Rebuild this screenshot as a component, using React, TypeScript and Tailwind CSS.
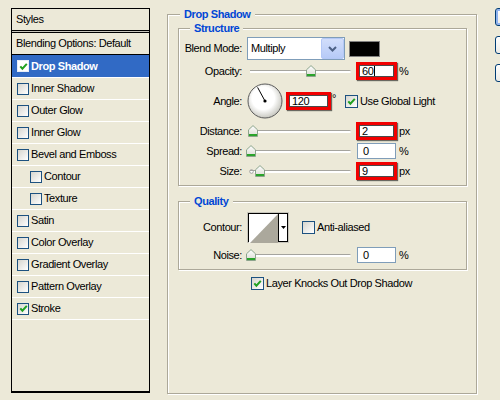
import React from "react";

const Check = ({ small = false, checked = false, selected = false }: { small?: boolean; checked?: boolean; selected?: boolean }) => (
  <div
    className={`${small ? "w-[12px] h-[12px]" : "w-[13px] h-[13px]"} shrink-0 border ${selected ? "border-[#E8EEF8] bg-white" : "border-[#1C5180] bg-[linear-gradient(135deg,#D6D5CE,#FFFFFF)]"} flex items-center justify-center`}
  >
    {checked && (
      <svg width="9" height="9" viewBox="0 0 9 9">
        <path d="M1.3 4.3 L3.4 6.7 L7.8 1.9" fill="none" stroke="#21A121" strokeWidth="2" />
      </svg>
    )}
  </div>
);

const Thumb = ({ pos }: { pos: string }) => (
  <svg className={`absolute top-[4px] ${pos}`} width="10" height="12" viewBox="0 0 10 12">
    <defs>
      <linearGradient id="tg" x1="0" y1="0" x2="0" y2="1">
        <stop offset="0" stopColor="#FFFFFF" />
        <stop offset="1" stopColor="#DADAD2" />
      </linearGradient>
    </defs>
    <path d="M0.5 11.5 V4.8 L5 0.6 L9.5 4.8 V11.5 Z" fill="url(#tg)" stroke="#8CA48C" />
    <rect x="1" y="9" width="8" height="2" fill="#2BA32B" />
  </svg>
);

const Slider = ({ pos, ring = false }: { pos: string; ring?: boolean }) => (
  <div className="relative w-[104px] h-[20px] shrink-0">
    <div className="absolute left-[3px] right-0 top-[9px] h-[3px] border-t border-[#A5A49E] bg-white rounded-r-[2px]" />
    {ring && (
      <svg className="absolute left-[2px] top-[8px]" width="5" height="5" viewBox="0 0 5 5">
        <circle cx="2.5" cy="2.5" r="1.8" fill="none" stroke="#A0A0A0" />
      </svg>
    )}
    <Thumb pos={pos} />
  </div>
);

const Field = ({ value, red = false, wide = false, cursor = false }: { value: string; red?: boolean; wide?: boolean; cursor?: boolean }) =>
  red ? (
    <div className={`${wide ? "w-[45px]" : "w-[41px]"} h-[18px] shrink-0 border-[3px] border-[#F20000] shadow-[1px_1px_1px_rgba(0,0,0,0.55)]`}>
      <div className="w-full h-full border border-[#4A4A4A] bg-white flex items-center pl-[2px] leading-none">
        {value}
        {cursor && <span className="w-px h-[10px] bg-black ml-[1px]" />}
      </div>
    </div>
  ) : (
    <div className="w-[41px] h-[18px] shrink-0 p-[1px]">
      <div className="w-full h-full border border-[#7F9DB9] bg-white flex items-center pl-[5px] leading-none">{value}</div>
    </div>
  );

const Label = ({ children }: { children: React.ReactNode }) => (
  <div className="w-[63px] shrink-0 text-right mr-[5px]">{children}</div>
);

const Title = ({ children, pos }: { children: React.ReactNode; pos: string }) => (
  <span className={`absolute top-[-7px] ${pos} px-[4px] bg-[#ECE9D8] text-[#0046D5] font-bold leading-[13px]`}>{children}</span>
);

const items: { label: string; indent?: boolean; checked?: boolean }[] = [
  { label: "Inner Shadow" },
  { label: "Outer Glow" },
  { label: "Inner Glow" },
  { label: "Bevel and Emboss" },
  { label: "Contour", indent: true },
  { label: "Texture", indent: true },
  { label: "Satin" },
  { label: "Color Overlay" },
  { label: "Gradient Overlay" },
  { label: "Pattern Overlay" },
  { label: "Stroke", checked: true },
];

const LeftPanel = () => (
  <div className="w-[139px] h-[385px] shrink-0 border border-black border-b-2 flex flex-col">
    <div className="h-[21px] flex items-center pl-[4px]">Styles</div>
    <div className="h-[3px] border-y border-black bg-[#C8C6BC]" />
    <div className="h-[22px] border-b border-black flex items-center pl-[4px]">Blending Options: Default</div>
    <div className="h-[23px] border-b border-white bg-[#316AC5] flex items-center pl-[5px] gap-[2px] text-white font-bold">
      <Check small checked selected />
      <span>Drop Shadow</span>
    </div>
    {items.map((it) => (
      <div
        key={it.label}
        className={`h-[22px] border-b border-white flex items-center gap-[2px] ${it.indent ? "pl-[18px]" : "pl-[5px]"}`}
      >
        <Check small checked={it.checked} />
        <span>{it.label}</span>
      </div>
    ))}
  </div>
);

const Dial = () => (
  <svg width="36" height="36" viewBox="0 0 36 36" className="shrink-0">
    <defs>
      <radialGradient id="dg" cx="45%" cy="42%" r="60%">
        <stop offset="0.55" stopColor="#FFFFFF" />
        <stop offset="1" stopColor="#C4C4BC" />
      </radialGradient>
    </defs>
    <circle cx="18" cy="18" r="17" fill="url(#dg)" stroke="#5A5A5A" strokeWidth="1" />
    <line x1="18" y1="18" x2="10.6" y2="4.4" stroke="#000" strokeWidth="1" />
    <circle cx="18" cy="18" r="1.6" fill="#000" />
  </svg>
);

const ContourBox = () => (
  <div className="w-[42px] h-[31px] shrink-0 border border-[#C8C6BC] bg-white flex">
    <div className="flex-1 border border-black flex">
      <svg width="29" height="29" viewBox="0 0 29 29" className="shrink-0">
        <rect width="29" height="29" fill="#fff" />
        <path d="M1 29 L29 0 L29 29 Z" fill="#ABA89C" />
      </svg>
      <div className="flex-1 border-l border-black flex items-center justify-center">
        <svg width="5" height="3" viewBox="0 0 5 3">
          <path d="M0 0 H5 L2.5 3 Z" fill="#000" />
        </svg>
      </div>
    </div>
  </div>
);

const Group = ({ title, h, children }: { title: string; h: string; children: React.ReactNode }) => (
  <div className={`relative w-[289px] ${h} border border-[#ACA899] shadow-[inset_1px_1px_0_#fff,1px_1px_0_#fff]`}>
    <Title pos="left-[11px]">{title}</Title>
    {children}
  </div>
);

export default function App() {
  return (
    <div className="w-[500px] h-[400px] overflow-hidden bg-[#ECE9D8] flex items-start pl-[11px] pt-[8px] text-[11px] leading-[13px] tracking-[-0.4px] text-black font-[family-name:Liberation_Sans,Arial,sans-serif]">
      <LeftPanel />

      <div className="relative ml-[17px] mt-[6px] w-[310px] h-[380px] shrink-0 border border-[#ACA899] shadow-[inset_1px_1px_0_#fff,1px_1px_0_#fff] pt-[13px] pl-[10px]">
        <Title pos="left-[12px]">Drop Shadow</Title>

        <Group title="Structure" h="h-[158px]">
          <div className="pt-[8px] flex flex-col">
            <div className="h-[23px] flex items-center">
              <Label>Blend Mode:</Label>
              <div className="w-[98px] h-[23px] border border-[#7F9DB9] bg-white flex items-center justify-between">
                <span className="pl-[3px]">Multiply</span>
                <div className="w-[23px] h-[21px] mr-[0px] rounded-[2px] border border-[#B4C8F6] bg-[linear-gradient(#D2DEFB,#B6CAF7)] flex items-center justify-center">
                  <svg width="9" height="6" viewBox="0 0 9 6">
                    <path d="M1 1 L4.5 4.5 L8 1" fill="none" stroke="#4D6185" strokeWidth="2" />
                  </svg>
                </div>
              </div>
              <div className="ml-[4px] w-[31px] h-[16px] bg-black border border-[#808080]" />
            </div>

            <div className="mt-[1px] h-[20px] flex items-center">
              <Label>Opacity:</Label>
              <Slider pos="left-[59px]" />
              <div className="ml-[5px]" />
              <Field value="60" red cursor />
              <span className="ml-[2px]">%</span>
            </div>

            <div className="mt-[2px] h-[36px] flex items-center">
              <Label>Angle:</Label>
              <Dial />
              <div className="ml-[3px]" />
              <Field value="120" red wide />
              <span className="w-[14px] self-start mt-[9px] pl-[1px]">°</span>
              <Check checked />
              <span className="ml-[2px]">Use Global Light</span>
            </div>

            <div className="mt-[2px] h-[20px] flex items-center">
              <Label>Distance:</Label>
              <Slider pos="left-[1px]" />
              <div className="ml-[5px]" />
              <Field value="2" red />
              <span className="ml-[2px]">px</span>
            </div>

            <div className="h-[20px] flex items-center">
              <Label>Spread:</Label>
              <Slider pos="left-[-1px]" />
              <div className="ml-[5px]" />
              <Field value="0" />
              <span className="ml-[2px]">%</span>
            </div>

            <div className="h-[20px] flex items-center">
              <Label>Size:</Label>
              <Slider pos="left-[8px]" ring />
              <div className="ml-[5px]" />
              <Field value="9" red />
              <span className="ml-[2px]">px</span>
            </div>
          </div>
        </Group>

        <div className="mt-[15px]">
          <Group title="Quality" h="h-[69px]">
            <div className="pt-[10px] flex flex-col">
              <div className="h-[31px] flex items-center">
                <Label>Contour:</Label>
                <ContourBox />
                <div className="ml-[13px]" />
                <Check />
                <span className="ml-[2px]">Anti-aliased</span>
              </div>
              <div className="mt-[2px] h-[20px] flex items-center">
                <Label>Noise:</Label>
                <Slider pos="left-[-1px]" />
                <div className="ml-[5px]" />
                <Field value="0" />
                <span className="ml-[2px]">%</span>
              </div>
            </div>
          </Group>
        </div>

        <div className="mt-[7px] h-[13px] flex items-center pl-[73px]">
          <Check checked />
          <span className="ml-[2px]">Layer Knocks Out Drop Shadow</span>
        </div>
      </div>

      <div className="ml-[18px] shrink-0 flex flex-col gap-[10px]">
        <div className="w-[14px] h-[18px] rounded-[3px] border border-[#003C74] bg-[linear-gradient(#FFFFFF,#ECEBE6)] shadow-[inset_0_0_0_2px_#8FB2EE]" />
        <div className="w-[14px] h-[18px] rounded-[3px] border border-[#003C74] bg-[linear-gradient(#FFFFFF,#ECEBE6)]" />
        <div className="w-[14px] h-[18px] rounded-[3px] border border-[#003C74] bg-[linear-gradient(#FFFFFF,#ECEBE6)]" />
      </div>
    </div>
  );
}
